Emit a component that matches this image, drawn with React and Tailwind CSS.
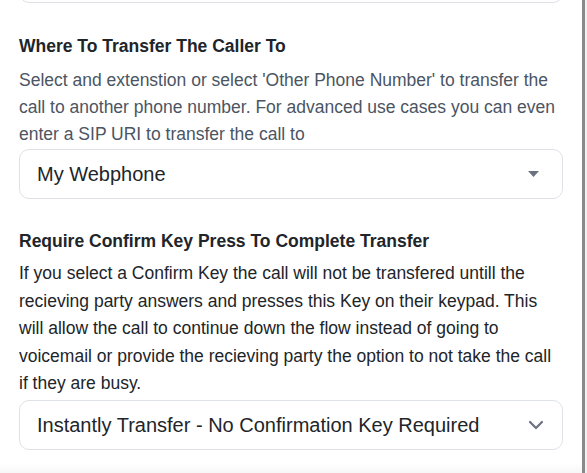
import React from 'react';

const Caret = () => (
  <svg width="11" height="6" viewBox="0 0 11 6" className="text-[#6b7280]">
    <path d="M0 0h11L5.5 6z" fill="currentColor" />
  </svg>
);

const Chevron = () => (
  <svg width="16" height="16" viewBox="0 0 16 16" fill="none" className="text-[#6b7280]">
    <path d="M2 5l6 6 6-6" stroke="currentColor" strokeWidth="2.2" strokeLinecap="round" strokeLinejoin="round" />
  </svg>
);

const SelectBox = ({ value, icon, className = '' }) => (
  <div className={`flex items-center justify-between h-[50px] pl-[17px] border border-[#dee2e6] rounded-[10px] bg-white ${className}`}>
    <span className="text-[20px] text-[#212529]">{value}</span>
    {icon}
  </div>
);

const App = () => {
  return (
    <div className="flex w-[587px] h-[473px] overflow-hidden bg-white" style={{ fontFamily: '"Liberation Sans", Arial, sans-serif' }}>
      <div className="flex-1 flex flex-col relative">
        <div className="mt-[-47px] mx-[19px] h-[50px] border border-[#dee2e6] rounded-[10px]" />

        <h3 className="mt-[30px] mx-[19px] text-[17.5px] leading-[27px] font-bold text-[#212529]">
          Where To Transfer The Caller To
        </h3>
        <p className="mt-[7px] ml-[19px] mr-[8px] text-[17.5px] leading-[27px] text-[#4b5563]">
          Select and extenstion or select 'Other Phone Number' to transfer the call to another phone number. For advanced use cases you can even enter a SIP URI to transfer the call to
        </p>
        <SelectBox value="My Webphone" icon={<Caret />} className="mt-[1px] mx-[19px] pr-[23px]" />

        <h3 className="mt-[29px] mx-[19px] text-[17.5px] leading-[27px] font-bold text-[#212529]">
          Require Confirm Key Press To Complete Transfer
        </h3>
        <p className="mt-[5px] mx-[19px] text-[17.5px] leading-[27.5px] text-[#212529]">
          If you select a Confirm Key the call will not be transfered untill the recieving party answers and presses this Key on their keypad. This will allow the call to continue down the flow instead of going to voicemail or provide the recieving party the option to not take the call if they are busy.
        </p>
        <SelectBox value="Instantly Transfer - No Confirmation Key Required" icon={<Chevron />} className="mt-[2px] mx-[19px] h-[49px] pr-[18px]" />

        <div className="absolute left-0 right-0 bottom-0 h-[10px] bg-gradient-to-b from-white to-[#f7f7f7]" />
      </div>
      <div className="w-[3px] bg-[#8a8a8a]" />
      <div className="w-[2px] bg-[#f1f1f1]" />
    </div>
  );
};

export default App;
